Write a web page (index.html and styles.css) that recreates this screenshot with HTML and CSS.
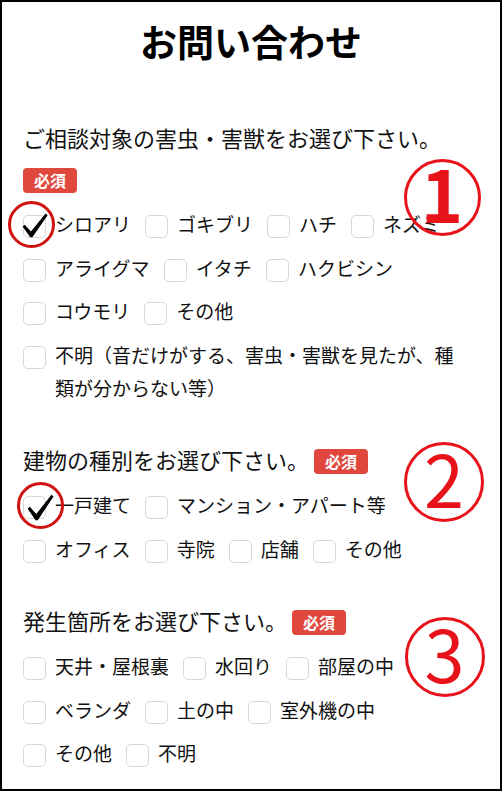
FILE: index.html
```html
<!DOCTYPE html>
<html lang="ja">
<head>
<meta charset="utf-8">
<title>お問い合わせ</title>
<link rel="stylesheet" href="styles.css">
</head>
<body>
<div class="page">
  <h1 class="title">お問い合わせ</h1>

  <section class="q">
    <h2 class="q-head">ご相談対象の害虫・害獣をお選び下さい。 <span class="req">必須</span></h2>
    <ul class="opts">
      <li class="opt"><span class="box"></span><span class="lbl">シロアリ</span>
        <svg class="check check-a" viewBox="0 0 26 25" preserveAspectRatio="none"><path d="M0.6 13.6 L2.8 11.8 L8.9 18.6 L23.6 0.6 L25.6 2.2 L10.4 24.2 L8.2 24.2 Z"/></svg>
        <span class="ring ring-a"></span>
      </li>
      <li class="opt"><span class="box"></span><span class="lbl">ゴキブリ</span></li>
      <li class="opt"><span class="box"></span><span class="lbl">ハチ</span></li>
      <li class="opt"><span class="box"></span><span class="lbl">ネズミ</span></li>
      <li class="opt"><span class="box"></span><span class="lbl">アライグマ</span></li>
      <li class="opt"><span class="box"></span><span class="lbl">イタチ</span></li>
      <li class="opt"><span class="box"></span><span class="lbl">ハクビシン</span></li>
      <li class="opt"><span class="box"></span><span class="lbl">コウモリ</span></li>
      <li class="opt"><span class="box"></span><span class="lbl">その他</span></li>
      <li class="opt"><span class="box"></span><span class="lbl">不明（音だけがする、害虫・害獣を見たが、種類が分からない等）</span></li>
    </ul>
  </section>

  <section class="q">
    <h2 class="q-head">建物の種別をお選び下さい。 <span class="req">必須</span></h2>
    <ul class="opts">
      <li class="opt"><span class="box"></span><span class="lbl">一戸建て</span>
        <svg class="check check-b" viewBox="0 0 26 25" preserveAspectRatio="none"><path d="M0.6 13.6 L2.8 11.8 L8.9 18.6 L23.6 0.6 L25.6 2.2 L10.4 24.2 L8.2 24.2 Z"/></svg>
        <span class="ring ring-b"></span>
      </li>
      <li class="opt"><span class="box"></span><span class="lbl">マンション・アパート等</span></li>
      <li class="opt"><span class="box"></span><span class="lbl">オフィス</span></li>
      <li class="opt"><span class="box"></span><span class="lbl">寺院</span></li>
      <li class="opt"><span class="box"></span><span class="lbl">店舗</span></li>
      <li class="opt"><span class="box"></span><span class="lbl">その他</span></li>
    </ul>
  </section>

  <section class="q">
    <h2 class="q-head">発生箇所をお選び下さい。 <span class="req">必須</span></h2>
    <ul class="opts">
      <li class="opt"><span class="box"></span><span class="lbl">天井・屋根裏</span></li>
      <li class="opt"><span class="box"></span><span class="lbl">水回り</span></li>
      <li class="opt"><span class="box"></span><span class="lbl">部屋の中</span></li>
      <li class="opt"><span class="box"></span><span class="lbl">ベランダ</span></li>
      <li class="opt"><span class="box"></span><span class="lbl">土の中</span></li>
      <li class="opt"><span class="box"></span><span class="lbl">室外機の中</span></li>
      <li class="opt"><span class="box"></span><span class="lbl">その他</span></li>
      <li class="opt"><span class="box"></span><span class="lbl">不明</span></li>
    </ul>
  </section>

  <div class="num num-1"><span class="digit bold">1</span></div>
  <div class="num num-2"><span class="digit">2</span></div>
  <div class="num num-3"><span class="digit">3</span></div>
</div>
</body>
</html>
```
FILE: styles.css
```css
* { box-sizing: border-box; }

html, body {
  margin: 0;
  padding: 0;
  background: #fff;
}

body {
  font-family: "Noto Sans CJK JP", "Noto Sans", sans-serif;
  color: #111;
}

.page {
  position: relative;
  width: 502px;
  height: 791px;
  border: 2px solid #000;
  padding: 14px 21px 0;
  overflow: hidden;
}

.title {
  margin: 0 0 51px;
  font-size: 37px;
  line-height: 50px;
  font-weight: 700;
  text-align: center;
  color: #000;
}

.q { margin-top: 35.5px; }

.q-head {
  margin: 0 0 8px;
  font-size: 22px;
  line-height: 41px;
  font-weight: 400;
}

.req {
  display: inline-block;
  vertical-align: 1px;
  height: 25px;
  line-height: 25px;
  padding: 0 11px;
  background: #e0483e;
  color: #fff;
  font-size: 16px;
  font-weight: 700;
  border-radius: 4px;
}

.opts {
  list-style: none;
  margin: 0;
  padding: 0 14px 0 0;
  display: flex;
  flex-wrap: wrap;
  column-gap: 14px;
  row-gap: 10.5px;
}

.opt {
  position: relative;
  display: flex;
  align-items: flex-start;
  gap: 9px;
  font-size: 19px;
  line-height: 33px;
}

.box {
  flex: none;
  width: 23px;
  height: 23px;
  margin-top: 8px;
  border: 1px solid #d8d8d8;
  border-radius: 5px;
  background: #fff;
}

.lbl { min-width: 0; }

.check {
  position: absolute;
  fill: #000;
}
.check-a { left: -1px; top: 5.5px; width: 26px; height: 25px; }
.check-b { left: 4px; top: 6px; width: 27px; height: 27px; }

.ring {
  position: absolute;
  width: 47px;
  height: 47px;
  border: 3px solid #cf1212;
  border-radius: 50%;
}
.ring-a { left: -15.5px; top: -6px; }
.ring-b { left: -6.5px; top: -6.5px; }

.num {
  position: absolute;
  display: flex;
  align-items: center;
  justify-content: center;
  border: 3px solid #e8121a;
  border-radius: 50%;
  color: #e8121a;
  font-size: 72px;
  line-height: 1;
}
.num-1 { left: 401.5px; top: 156.5px; width: 77px; height: 77px; }
.num-2 { left: 402px; top: 440px; width: 80px; height: 80px; }
.num-3 { left: 402.5px; top: 614.5px; width: 80px; height: 80px; }

.digit { margin-top: -10px; }
.digit.bold { font-weight: 700; }
```
